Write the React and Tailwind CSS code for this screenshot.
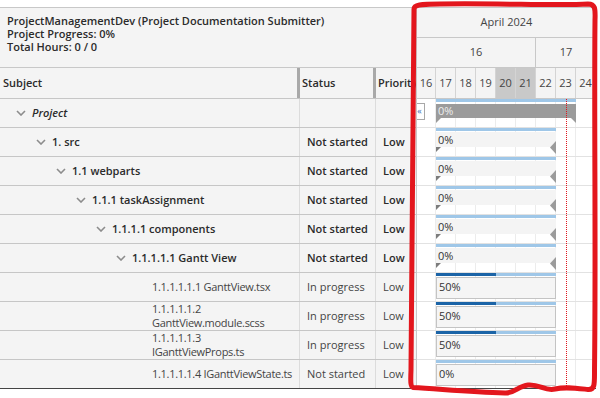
import React from 'react';

const DAYS = [
  { d: 16, w: 'w-[19px]' },
  { d: 17, w: 'w-[20px]' },
  { d: 18, w: 'w-[20px]' },
  { d: 19, w: 'w-[20px]' },
  { d: 20, w: 'w-[20px]', weekend: true },
  { d: 21, w: 'w-[20px]', weekend: true },
  { d: 22, w: 'w-[20px]' },
  { d: 23, w: 'w-[20px]' },
  { d: 24, w: 'w-[20px]' },
];

const ROWS = [
  { name: ['Project'], level: 0, italic: true, type: 'project', status: '', priority: '' },
  { name: ['1. src'], level: 1, type: 'summary', status: 'Not started', priority: 'Low' },
  { name: ['1.1 webparts'], level: 2, type: 'summary', status: 'Not started', priority: 'Low' },
  { name: ['1.1.1 taskAssignment'], level: 3, type: 'summary', status: 'Not started', priority: 'Low' },
  { name: ['1.1.1.1 components'], level: 4, type: 'summary', status: 'Not started', priority: 'Low' },
  { name: ['1.1.1.1.1 Gantt View'], level: 5, type: 'summary', status: 'Not started', priority: 'Low' },
  { name: ['1.1.1.1.1.1 GanttView.tsx'], level: 6, type: 'task', status: 'In progress', priority: 'Low', progress: 50 },
  { name: ['1.1.1.1.1.2', 'GanttView.module.scss'], level: 6, type: 'task', status: 'In progress', priority: 'Low', progress: 50 },
  { name: ['1.1.1.1.1.3', 'IGanttViewProps.ts'], level: 6, type: 'task', status: 'In progress', priority: 'Low', progress: 50 },
  { name: ['1.1.1.1.1.4 IGanttViewState.ts'], level: 6, type: 'task', status: 'Not started', priority: 'Low', progress: 0 },
];

function Chevron() {
  return (
    <svg width="10" height="6" viewBox="0 0 10 6" className="shrink-0">
      <path d="M1 1 L5 5 L9 1" fill="none" stroke="#8c8c8c" strokeWidth="1.6" />
    </svg>
  );
}

function SubjectCell({ row }) {
  const bold = row.type !== 'task';
  return (
    <div
      className="w-[300px] shrink-0 h-full flex items-center border-r border-[#dcdcdc]"
      style={{ paddingLeft: 16 + row.level * 20 }}
    >
      {row.type === 'task' ? <span className="w-[10px] shrink-0" /> : <Chevron />}
      <div className={`ml-[6px] leading-[14px] whitespace-nowrap ${bold ? 'font-semibold text-[#2b2b2b]' : 'text-[#444] tracking-[-0.3px]'} ${row.italic ? 'italic' : ''}`}>
        {row.name.map((n) => (
          <div key={n}>{n}</div>
        ))}
      </div>
    </div>
  );
}

function LeftRow({ row, last }) {
  const bold = row.type !== 'task';
  const tone = bold ? 'font-semibold text-[#2b2b2b]' : 'text-[#444]';
  return (
    <div className={`flex h-[29px] border-b ${last ? 'border-[#444]' : 'border-[#c6c6c6]'}`}>
      <SubjectCell row={row} />
      <div className={`w-[76px] shrink-0 h-full flex items-center pl-[7px] whitespace-nowrap border-r border-[#dcdcdc] ${tone}`}>
        {row.status}
      </div>
      <div className={`w-[80px] shrink-0 h-full flex items-center pl-[7px] whitespace-nowrap ${tone}`}>
        {row.priority}
      </div>
    </div>
  );
}

function Bar({ row }) {
  if (row.type === 'project') {
    return (
      <div className="absolute left-[19px] top-0 w-[140px] h-[25px]">
        <div className="h-[3px] bg-[#9fc7e8]" />
        <div className="mt-[2px] h-[14px] bg-[#9b9b9b] text-[11px] leading-[14px] pl-[2px] text-[#eeeeee]">0%</div>
        <div className="flex justify-between">
          <svg width="5" height="5" viewBox="0 0 5 5"><polygon points="0,0 5,0 0,5" fill="#9b9b9b" /></svg>
          <svg width="5" height="5" viewBox="0 0 5 5"><polygon points="0,0 5,0 5,5" fill="#9b9b9b" /></svg>
        </div>
      </div>
    );
  }
  if (row.type === 'summary') {
    return (
      <div className="absolute left-[19px] top-0 w-[120px] h-[27px]">
        <div className="h-[3px] bg-[#9fc7e8]" />
        <div className="mt-[1px] h-[15px] bg-[#f4f4f4] text-[11px] leading-[16px] pl-[2px] text-[#333]">0%</div>
        <svg width="5" height="5" viewBox="0 0 5 5"><polygon points="0,0 5,0 0,5" fill="#7c7c7c" /></svg>
        <svg width="6" height="13" viewBox="0 0 6 13" className="absolute right-0 top-[13px]">
          <polygon points="6,0 6,13 0,6.5" fill="#9b9b9b" />
        </svg>
      </div>
    );
  }
  return (
    <div className="absolute left-[19px] top-0 w-[120px]">
      <div className="flex h-[3px] bg-[#9fc7e8]">
        <div className="h-full bg-[#1b64a7]" style={{ width: `${row.progress}%` }} />
      </div>
      <div className="mt-[1px] h-[22px] border border-[#c4c4c4] bg-[#f5f5f5] text-[11px] leading-[18px] pl-[2px] text-[#333]">
        {row.progress}%
      </div>
    </div>
  );
}

function ChartRow({ row, index, last }) {
  return (
    <div className={`relative flex h-[29px] border-b ${last ? 'border-[#444]' : 'border-[#e2e2e2]'}`}>
      {DAYS.map((day) => (
        <div key={day.d} className={`${day.w} h-full shrink-0 border-r border-[#ececec]`} />
      ))}
      <Bar row={row} />
      {index === 0 && (
        <div className="absolute -left-[3px] top-[4px] w-[11px] h-[17px] bg-white border border-[#a8a8a8] text-[9px] leading-[14px] text-[#3b6fb6] text-center">
          «
        </div>
      )}
    </div>
  );
}

export default function App() {
  return (
    <div className="relative w-[600px] h-[398px] bg-white overflow-hidden pt-[7px] text-[11px] text-[#333] font-['Open_Sans','Liberation_Sans',sans-serif]">
      <div className="flex w-[596px] border-t border-[#c8c8c8]">
        {/* left grid */}
        <div className="w-[417px] shrink-0 overflow-hidden border-r border-[#c8c8c8] bg-[#f4f4f4]">
          <div className="h-[60px] border-b border-[#c8c8c8] pt-[6px] pl-[7px] font-semibold leading-[13px] text-[#2b2b2b] whitespace-nowrap">
            <div>ProjectManagementDev (Project Documentation Submitter)</div>
            <div>Project Progress: 0%</div>
            <div>Total Hours: 0 / 0</div>
          </div>
          <div className="flex h-[31px] border-b border-[#c6c6c6] font-semibold text-[#2b2b2b] whitespace-nowrap">
            <div className="w-[300px] shrink-0 flex items-center pl-[3px] border-r-[3px] border-[#a9a9a9]">Subject</div>
            <div className="w-[76px] shrink-0 flex items-center pl-[2px] border-r-[3px] border-[#a9a9a9]">Status</div>
            <div className="w-[80px] shrink-0 flex items-center pl-[2px]">Priority</div>
          </div>
          {ROWS.map((row, i) => (
            <LeftRow key={i} row={row} last={i === ROWS.length - 1} />
          ))}
        </div>

        {/* timeline */}
        <div className="relative w-[179px] shrink-0 overflow-hidden">
          <div className="bg-[#f4f4f4] text-[#444]">
            <div className="h-[30px] border-b border-[#c8c8c8] flex items-center justify-center">April 2024</div>
            <div className="flex h-[30px] border-b border-[#c8c8c8]">
              <div className="w-[119px] shrink-0 border-r border-[#c8c8c8] flex items-center justify-center">16</div>
              <div className="flex-1 flex items-center justify-center">17</div>
            </div>
            <div className="flex h-[31px] border-b border-[#c8c8c8]">
              {DAYS.map((day) => (
                <div
                  key={day.d}
                  className={`${day.w} shrink-0 border-r border-[#d4d4d4] flex items-center justify-center ${day.weekend ? 'bg-[#c9c9c9]' : ''}`}
                >
                  {day.d}
                </div>
              ))}
            </div>
          </div>
          <div className="relative">
            {ROWS.map((row, i) => (
              <ChartRow key={i} row={row} index={i} last={i === ROWS.length - 1} />
            ))}
            <div className="absolute left-[149px] top-0 bottom-[1px] border-l border-dotted border-[#e0161c]" />
          </div>
        </div>
      </div>

      {/* hand-drawn highlight */}
      <svg className="absolute left-0 top-0 pointer-events-none" width="600" height="398" viewBox="0 0 600 398">
        <path
          d="M414,9 C414,5 420,4 440,4 C500,3 560,6 588,4 C595,4 595.5,8 595,20 C594,120 596,250 594.5,370 C594.5,384 595,390 588,389.5 C575,388 565,386.5 555,389 C545,391.5 540,384 528,385 C518,386 515,393.5 505,393 C470,392 440,389 413,387.5 C410.5,386.5 410.5,382 411,370 C412,250 413,120 414,9 Z"
          fill="none"
          stroke="#e3161d"
          strokeWidth="5"
          strokeLinejoin="round"
        />
      </svg>
    </div>
  );
}
